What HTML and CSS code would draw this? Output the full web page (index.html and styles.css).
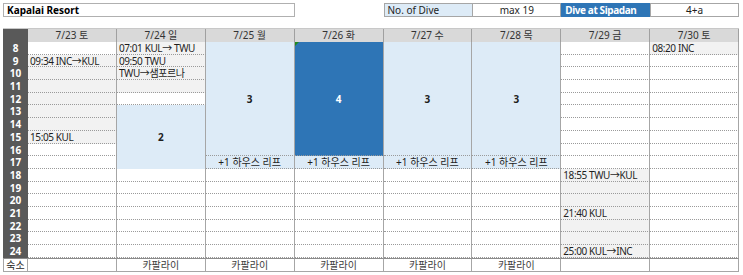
FILE: index.html
```html
<!DOCTYPE html>
<html lang="ko">
<head>
<meta charset="utf-8">
<title>Kapalai Resort</title>
<link rel="stylesheet" href="styles.css">
</head>
<body>
<div class="sheet">
  <div class="top">
    <div class="box title">Kapalai Resort</div>
    <div class="box dive-label">No. of Dive</div>
    <div class="box center">max 19</div>
    <div class="box sipadan">Dive at Sipadan</div>
    <div class="box center">4+a</div>
  </div>
  <div class="grid">
    <!-- hour labels -->
    <div class="corner"></div>
    <div class="hr">8</div><div class="hr">9</div><div class="hr">10</div><div class="hr">11</div><div class="hr">12</div><div class="hr">13</div><div class="hr">14</div><div class="hr">15</div><div class="hr">16</div><div class="hr">17</div><div class="hr">18</div><div class="hr">19</div><div class="hr">20</div><div class="hr">21</div><div class="hr">22</div><div class="hr">23</div><div class="hr">24</div>
    <div class="lodge-label">숙소</div>

    <!-- 7/23 -->
    <div class="head">7/23 토</div>
    <div class="c"></div>
    <div class="c g">09:34 INC→KUL</div><div class="c g"></div><div class="c g"></div><div class="c g"></div><div class="c g"></div><div class="c g"></div><div class="c g">15:05 KUL</div>
    <div class="c"></div><div class="c"></div><div class="c"></div><div class="c"></div><div class="c"></div><div class="c"></div><div class="c"></div><div class="c"></div><div class="c"></div>
    <div class="lodge"></div>

    <!-- 7/24 -->
    <div class="head">7/24 일</div>
    <div class="c g">07:01 KUL→ TWU</div><div class="c g">09:50 TWU</div><div class="c g">TWU→샘포르나</div><div class="c g"></div>
    <div class="c"></div>
    <div class="blk lb span5">2</div>
    <div class="c"></div><div class="c"></div><div class="c"></div><div class="c"></div><div class="c"></div><div class="c"></div><div class="c"></div>
    <div class="lodge">카팔라이</div>

    <!-- 7/25 -->
    <div class="head">7/25 월</div>
    <div class="blk lb span9">3</div>
    <div class="c lb mid">+1 하우스 리프</div>
    <div class="c"></div><div class="c"></div><div class="c"></div><div class="c"></div><div class="c"></div><div class="c"></div><div class="c"></div>
    <div class="lodge">카팔라이</div>

    <!-- 7/26 -->
    <div class="head">7/26 화</div>
    <div class="blk db span9 note">4</div>
    <div class="c lb mid">+1 하우스 리프</div>
    <div class="c"></div><div class="c"></div><div class="c"></div><div class="c"></div><div class="c"></div><div class="c"></div><div class="c"></div>
    <div class="lodge">카팔라이</div>

    <!-- 7/27 -->
    <div class="head">7/27 수</div>
    <div class="blk lb span9">3</div>
    <div class="c lb mid">+1 하우스 리프</div>
    <div class="c"></div><div class="c"></div><div class="c"></div><div class="c"></div><div class="c"></div><div class="c"></div><div class="c"></div>
    <div class="lodge">카팔라이</div>

    <!-- 7/28 -->
    <div class="head">7/28 목</div>
    <div class="blk lb span9">3</div>
    <div class="c lb mid">+1 하우스 리프</div>
    <div class="c"></div><div class="c"></div><div class="c"></div><div class="c"></div><div class="c"></div><div class="c"></div><div class="c"></div>
    <div class="lodge">카팔라이</div>

    <!-- 7/29 -->
    <div class="head">7/29 금</div>
    <div class="c"></div><div class="c"></div><div class="c"></div><div class="c"></div><div class="c"></div><div class="c"></div><div class="c"></div><div class="c"></div><div class="c"></div><div class="c"></div>
    <div class="c g">18:55 TWU→KUL</div><div class="c g"></div><div class="c g"></div><div class="c g">21:40 KUL</div><div class="c g"></div><div class="c g"></div><div class="c g">25:00 KUL→INC</div>
    <div class="lodge"></div>

    <!-- 7/30 -->
    <div class="head">7/30 토</div>
    <div class="c g">08:20 INC</div>
    <div class="c"></div><div class="c"></div><div class="c"></div><div class="c"></div><div class="c"></div><div class="c"></div><div class="c"></div><div class="c"></div><div class="c"></div><div class="c"></div><div class="c"></div><div class="c"></div><div class="c"></div><div class="c"></div><div class="c"></div><div class="c"></div>
    <div class="lodge"></div>
  </div>
</div>
</body>
</html>
```
FILE: styles.css
```css
* { box-sizing: border-box; }
html, body { background: #fff; }
body {
  margin: 0;
  padding: 3px 4px 0 3px;
  font-family: "Noto Sans", "Noto Sans CJK KR", sans-serif;
  font-size: 10px;
  color: #1e1e1e;
}
.sheet { width: 736px; }

.top {
  display: grid;
  grid-template-columns: 25px repeat(8, 1fr);
  height: 14px;
  margin-bottom: 11px;
}
.box {
  border: 1px solid #a6a6a6;
  line-height: 12px;
  padding: 0 3px;
  white-space: nowrap;
  overflow: hidden;
}
.title { grid-column: 1 / 5; font-weight: bold; color: #000; border-color: #b0b0b0; }
.dive-label { grid-column: 6; background: #ddebf7; border-right: none; }
.center { text-align: center; }
.sipadan {
  background: #2e75b6;
  color: #fff;
  font-weight: bold;
  letter-spacing: -0.4px;
  border-color: #2e75b6;
}

.grid {
  display: grid;
  grid-template-columns: 25px repeat(8, 1fr);
  grid-template-rows: 13px repeat(17, 12.69px) 14px;
  grid-auto-flow: column;
  border-top: 1px solid #c8c8c8;
}
.corner { background: #595959; }
.hr {
  background: #595959;
  color: #fff;
  font-weight: bold;
  text-align: center;
  line-height: 12px;
}
.lodge-label {
  border: 1px solid #a6a6a6;
  border-top: 1px solid #8c8c8c;
  text-align: center;
  line-height: 12px;
  background: #fff;
}
.head {
  background: #d9d9d9;
  border-right: 1px solid #a0a0a0;
  text-align: center;
  line-height: 12px;
  color: #333;
}
.c {
  border-bottom: 1px dotted #9a9a9a;
  border-right: 1px solid #a6a6a6;
  line-height: 12px;
  padding: 0 2px;
  letter-spacing: -0.4px;
  white-space: nowrap;
  overflow: hidden;
}
.g { background: #f2f2f2; }
.lb { background: #ddebf7; }
.db { background: #2e75b6; color: #fff; }
.mid { text-align: center; letter-spacing: 0; }
.blk {
  display: flex;
  align-items: center;
  justify-content: center;
  font-weight: bold;
  border-right: 1px solid #a6a6a6;
  position: relative;
}
.span5 { grid-row: span 5; }
.span9 { grid-row: span 9; border-bottom: 1px dotted #9a9a9a; }
.note::before {
  content: "";
  position: absolute;
  left: 0;
  top: 0;
  border-top: 4px solid #1f8a1f;
  border-right: 4px solid transparent;
}
.lodge {
  border-top: 1px solid #8c8c8c;
  border-bottom: 1px solid #a6a6a6;
  border-right: 1px solid #a6a6a6;
  text-align: center;
  line-height: 12px;
  color: #404040;
}
```
